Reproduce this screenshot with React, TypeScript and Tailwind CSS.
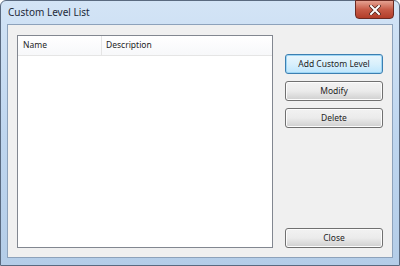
export default function App() {
  return (
    <div
      className="w-[400px] h-[266px] bg-white text-black"
      style={{ fontFamily: '"Noto Sans", "Open Sans", sans-serif' }}
    >
      {/* Window frame */}
      <div className="w-full h-full flex flex-col border border-[#5a6a80] rounded-t-[6px] bg-gradient-to-b from-[#d3e4f6] via-[#bfd6ef] to-[#b4cde8] px-[6px] pb-[7px]">
        {/* Title bar */}
        <div className="h-[23px] flex items-start justify-between">
          <span className="pt-[5px] pl-[1px] text-[10px] leading-[13px] text-[#1e2a3a]">Custom Level List</span>
          <button className="mt-[-1px] mr-[-1px] w-[39px] h-[19px] rounded-b-[4px] border border-[#6b2a22] bg-gradient-to-b from-[#e5a292] via-[#c75b47] to-[#b23d29] flex items-center justify-center">
            <svg width="12" height="10" viewBox="0 0 12 10">
              <path d="M2 1 L10 9 M10 1 L2 9" stroke="#4a2018" strokeWidth="3.4" strokeLinecap="square" />
              <path d="M2 1 L10 9 M10 1 L2 9" stroke="#ffffff" strokeWidth="2" strokeLinecap="square" />
            </svg>
          </button>
        </div>

        {/* Client area */}
        <div className="flex-1 flex border border-[#8da2bb] bg-[#f0f0f0] pl-[9px] pr-[9px] pt-[10px] pb-[9px] gap-[11px]">
          {/* List view */}
          <div className="w-[257px] flex flex-col border border-[#828790] bg-white">
            <div className="h-[20px] flex border-b border-[#e5e5e5] bg-gradient-to-b from-white to-[#f7f8fa] text-[8.5px] text-[#1e1e1e]">
              <div className="w-[84px] pl-[5px] flex items-center border-r border-[#e5e5e5]">Name</div>
              <div className="flex-1 pl-[4px] flex items-center">Description</div>
            </div>
            <div className="flex-1" />
          </div>

          {/* Buttons */}
          <div className="flex-1 flex flex-col pt-[19px]">
            <Btn label="Add Custom Level" primary />
            <div className="h-[7px]" />
            <Btn label="Modify" />
            <div className="h-[7px]" />
            <Btn label="Delete" />
            <div className="flex-1" />
            <Btn label="Close" />
          </div>
        </div>
      </div>
    </div>
  );
}

function Btn({ label, primary }: { label: string; primary?: boolean }) {
  return (
    <button
      className={
        "ml-[1px] w-[98px] h-[20px] rounded-[3px] border text-[8.5px] text-[#1e1e1e] flex items-center justify-center " +
        (primary
          ? "border-[#3c7fb1] bg-gradient-to-b from-[#eaf6fd] via-[#d9f0fc] to-[#bee6fd] shadow-[inset_0_0_0_1px_#9ed6f5]"
          : "border-[#707070] bg-gradient-to-b from-[#f2f2f2] via-[#ebebeb] to-[#cfcfcf] shadow-[inset_0_0_0_1px_#fcfcfc]")
      }
    >
      {label}
    </button>
  );
}
